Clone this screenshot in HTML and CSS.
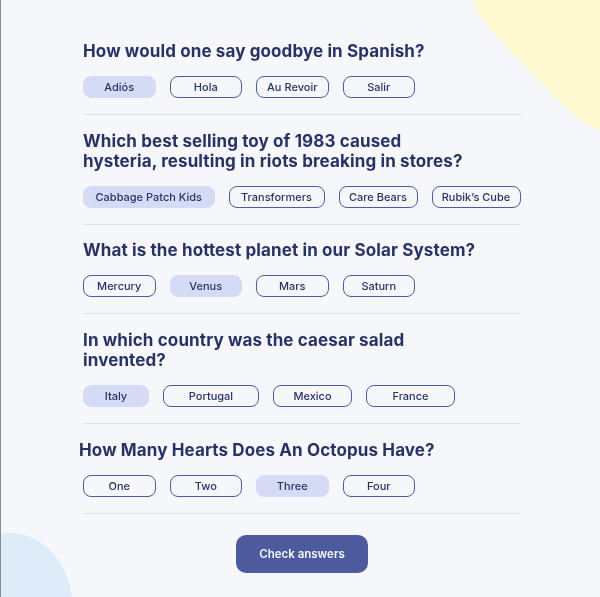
FILE: index.html
```html
<!DOCTYPE html>
<html lang="en">
<head>
<meta charset="utf-8">
<title>Quizzical</title>
<link rel="stylesheet" href="styles.css">
</head>
<body>
<svg class="blob blob-yellow" width="128" height="132" viewBox="472 0 128 132" aria-hidden="true">
  <path d="M473,0 C478,14 487,27 500,40 L555,97 C570,112 585,125 600,131 L600,0 Z" fill="#FFFAD1"/>
</svg>
<svg class="blob blob-blue" width="80" height="70" viewBox="0 527 80 70" aria-hidden="true">
  <ellipse cx="10" cy="605" rx="62" ry="72" fill="#DEEBF8"/>
</svg>
<div class="edge-line"></div>

<main class="quiz">
  <section class="question">
    <h2 class="q-title">How would one say goodbye in Spanish?</h2>
    <div class="answers">
      <button class="answer selected w72">Adiós</button>
      <button class="answer w72">Hola</button>
      <button class="answer w72">Au Revoir</button>
      <button class="answer w72">Salir</button>
    </div>
  </section>
  <section class="question">
    <h2 class="q-title">Which best selling toy of 1983 caused<br>hysteria, resulting in riots breaking in stores?</h2>
    <div class="answers">
      <button class="answer selected w131">Cabbage Patch Kids</button>
      <button class="answer w96">Transformers</button>
      <button class="answer w79">Care Bears</button>
      <button class="answer w89">Rubik’s Cube</button>
    </div>
  </section>
  <section class="question">
    <h2 class="q-title">What is the hottest planet in our Solar System?</h2>
    <div class="answers">
      <button class="answer w72">Mercury</button>
      <button class="answer selected w72">Venus</button>
      <button class="answer w72">Mars</button>
      <button class="answer w72">Saturn</button>
    </div>
  </section>
  <section class="question">
    <h2 class="q-title">In which country was the caesar salad<br>invented?</h2>
    <div class="answers">
      <button class="answer selected w66">Italy</button>
      <button class="answer w96">Portugal</button>
      <button class="answer w79">Mexico</button>
      <button class="answer w89">France</button>
    </div>
  </section>
  <section class="question">
    <h2 class="q-title q-title-shift">How Many Hearts Does An Octopus Have?</h2>
    <div class="answers">
      <button class="answer w72">One</button>
      <button class="answer w72">Two</button>
      <button class="answer selected w72">Three</button>
      <button class="answer w72">Four</button>
    </div>
  </section>
  <div class="actions">
    <button class="check">Check answers</button>
  </div>
</main>
</body>
</html>
```

FILE: styles.css
```css
* { box-sizing: border-box; }

html, body {
  margin: 0;
  padding: 0;
}

body {
  background: #F5F7FB;
  min-height: 597px;
  font-family: Inter, "Liberation Sans", sans-serif;
  color: #293264;
  overflow: hidden;
}

.blob {
  position: fixed;
  display: block;
}
.blob-yellow { top: 0; right: 0; }
.blob-blue { left: 0; bottom: 0; }

.edge-line {
  position: fixed;
  left: 0;
  top: 0;
  bottom: 0;
  width: 1px;
  background: #8c8c8c;
}

.quiz {
  position: relative;
  width: 438px;
  margin: 0 0 0 83px;
  padding-top: 25px;
}

.question {
  padding: 15.7px 0 16px;
  border-bottom: 1px solid #DBDEF0;
}

.question:first-child { padding-top: 16px; }

.q-title {
  margin: 0 0 15px;
  font-family: Inter, "Liberation Sans", sans-serif;
  font-weight: 700;
  font-size: 17px;
  letter-spacing: 0.12px;
  line-height: 20px;
  color: #293264;
  white-space: nowrap;
}

.q-title-shift { margin-left: -4px; }

.answers {
  display: flex;
  gap: 14px;
}

.answer {
  height: 22px;
  padding: 0;
  border: 0.8px solid #4D5B9E;
  border-radius: 8px;
  background: transparent;
  font-family: Inter, "Liberation Sans", sans-serif;
  font-weight: 500;
  font-size: 11px;
  color: #293264;
  text-align: center;
}

.answer.selected {
  background: #D6DBF5;
  border-color: #D6DBF5;
}

.w66 { width: 66px; }
.w72 { width: 72.5px; }
.w79 { width: 79px; }
.w89 { width: 89px; }
.w96 { width: 96px; }
.w131 { width: 131.5px; }

.actions {
  display: flex;
  justify-content: center;
  padding-top: 21px;
}

.check {
  width: 132px;
  height: 38px;
  border: none;
  border-radius: 10px;
  background: #4D5B9E;
  color: #F5F7FB;
  font-family: Inter, "Liberation Sans", sans-serif;
  font-weight: 600;
  font-size: 11.5px;
}
```
